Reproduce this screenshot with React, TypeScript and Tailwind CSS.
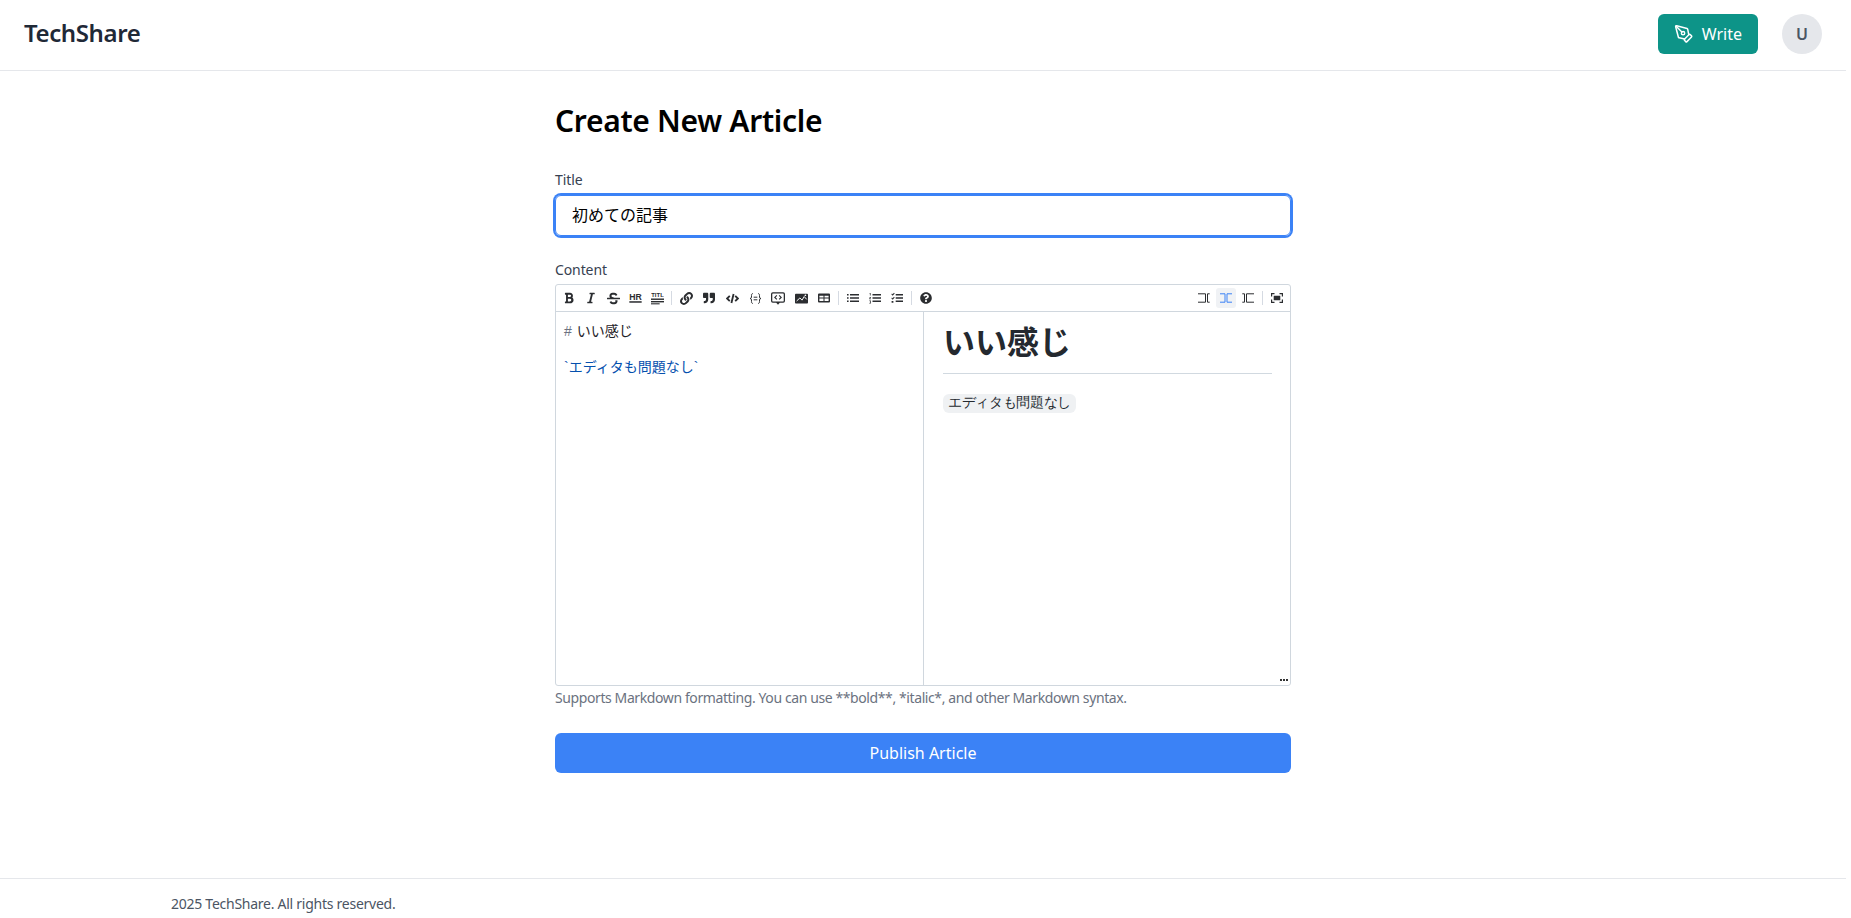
import { useState } from "react";
import { PenTool } from "lucide-react";
import { FaBold, FaItalic, FaStrikethrough, FaLink, FaQuoteRight, FaQuestionCircle } from "react-icons/fa";

const sans = "font-['Noto_Sans','Noto_Sans_CJK_JP',sans-serif]";

function Ico({ children, size = 12 }: { children: React.ReactNode; size?: number }) {
  return (
    <svg viewBox="0 0 12 12" width={size} height={size} fill="currentColor" className="block">
      {children}
    </svg>
  );
}

function ToolBtn({ children, active }: { children: React.ReactNode; active?: boolean }) {
  return (
    <button
      type="button"
      className={`flex h-5 w-5 shrink-0 items-center justify-center rounded-[3px] ${active ? "bg-[#f0f2f5] text-[#3b82f6]" : "text-[#2b2d30]"}`}
    >
      {children}
    </button>
  );
}

const Sep = () => <span className="mx-[4px] h-[14px] w-px shrink-0 bg-[#d5dae2]" />;

const groupOne = [
  <FaBold size={12} />,
  <FaItalic size={12} />,
  <FaStrikethrough size={13} />,
  <Ico size={13}>
    <text x="6" y="7" fontSize="8" fontWeight="700" textAnchor="middle" fontFamily="Liberation Sans">HR</text>
    <rect x=".3" y="8.500" width="11.400" height="1.400" />
  </Ico>,
  <Ico size={13}>
    <text x="6" y="5" fontSize="5.500" fontWeight="700" textAnchor="middle" fontFamily="Liberation Sans">TITL</text>
    <rect x="0" y="6" width="12" height="1.300" />
    <rect x="0" y="8.300" width="12" height="1.300" />
    <rect x="0" y="10.400" width="8" height="1" />
  </Ico>,
];

const groupTwo = [
  <FaLink size={13} />,
  <FaQuoteRight size={12} />,
  <Ico size={13}>
    <path d="M3.500 3.500 1 6l2.500 2.500M8.500 3.500 11 6l-2.500 2.500M7 1.800 5 10.200" fill="none" stroke="currentColor" strokeWidth="1.700" />
  </Ico>,
  <Ico size={13}>
    <path d="M3.500 1.500C2.300 1.500 2.300 2.300 2.300 3.200v1.500C2.300 5.500 1.800 6 1 6c.8 0 1.300.5 1.300 1.300v1.500c0 .9 0 1.700 1.200 1.700M8.500 1.500c1.200 0 1.200.8 1.200 1.700v1.500C9.700 5.500 10.200 6 11 6c-.8 0-1.300.5-1.300 1.300v1.500c0 .9 0 1.700-1.200 1.700M4.300 4.800h3.400M4.300 7.200h3.400" fill="none" stroke="currentColor" strokeWidth=".9" />
  </Ico>,
  <Ico size={14}>
    <path fillRule="evenodd" d="M1.500 1h9A1.500 1.500 0 0 1 12 2.500v6A1.500 1.500 0 0 1 10.500 10H7.500L6 11.800 4.500 10h-3A1.500 1.500 0 0 1 0 8.500v-6A1.500 1.500 0 0 1 1.500 1zm0 1.100a.4.4 0 0 0-.4.4v6c0 .2.200.4.400.4h9c.2 0 .4-.2.400-.4v-6a.4.4 0 0 0-.4-.4h-9z" />
    <path d="M5 3.800 3.300 5.500 5 7.200M7 3.800l1.700 1.700L7 7.200" fill="none" stroke="currentColor" strokeWidth="1" />
  </Ico>,
  <Ico size={13}>
    <rect x="0" y="1.500" width="12" height="9" rx=".8" />
    <path d="M1.500 8.300 4.500 5.500 6.500 7.500 8.500 4.200 10.800 6.800" fill="none" stroke="#fff" strokeWidth=".9" />
    <circle cx="9.600" cy="3" r=".8" fill="#fff" />
  </Ico>,
  <Ico>
    <path fillRule="evenodd" d="M1 1.500h10a1 1 0 0 1 1 1v7a1 1 0 0 1-1 1H1a1 1 0 0 1-1-1v-7a1 1 0 0 1 1-1zm.4 2.300v1.800h4.100V3.800H1.400zm5.100 0v1.800h4.100V3.800H6.500zM1.400 6.600v2.500h4.100V6.600H1.400zm5.100 0v2.500h4.100V6.600H6.500z" />
  </Ico>,
];

const groupThree = [
  <Ico>
    <path d="M0 2h1.600v1.400H0zM3 2h9v1.400H3zM0 5.300h1.600v1.400H0zM3 5.300h9v1.400H3zM0 8.600h1.600V10H0zM3 8.600h9V10H3z" />
  </Ico>,
  <Ico>
    <path d="M.6 1h1v2.500H.9V1.800H.6zM.3 5h1.600v.6l-.9 1h.9v.6H.3v-.6l.9-1H.3zM.3 8.500h1.600v3H.3v-.5h.9v-.7H.6v-.5h.6v-.8H.3zM3.500 2H12v1.400H3.500zM3.500 5.300H12v1.400H3.500zM3.500 8.600H12V10H3.500z" />
  </Ico>,
  <Ico>
    <path d="M.3 2.200l.7-.6.6.7L3 .8l.7.6-2 2.400zM.3 6.200l.7-.6.6.7L3 4.800l.7.6-2 2.400zM.6 9h1.800v1.800H.6zM4.700 2H12v1.400H4.700zM4.700 5.300H12v1.400H4.700zM4.700 8.600H12V10H4.700z" />
  </Ico>,
];

const viewBtns = [
  { d: "M0 1.800h7.500v8.400H0M11.700 1.800H9.500v8.400h2.200", active: false },
  { d: "M0 1.800h5v8.400H0M12 1.800H7v8.400h5", active: true },
  { d: "M.3 1.800h2.200v8.400H.3M12 1.800H4.500v8.400H12", active: false },
];

export default function App() {
  const [title, setTitle] = useState("初めての記事");

  return (
    <div className={`flex h-screen w-[1846px] flex-col overflow-hidden bg-white ${sans}`}>
      <header className="flex items-center justify-between border-b border-[#e5e7eb] px-6 pt-[14px] pb-4">
        <a className="pb-[2px] text-2xl font-semibold tracking-[-0.4px] text-[#1f2937]">TechShare</a>
        <div className="flex items-center gap-6">
          <button className="flex h-10 w-[100px] items-center gap-2 rounded-md bg-[#0d9488] px-4 text-base text-white">
            <PenTool size={20} strokeWidth={1.800} />
            Write
          </button>
          <div className="flex h-10 w-10 items-center justify-center rounded-full bg-[#e5e7eb] text-base font-semibold text-[#4b5563]">U</div>
        </div>
      </header>

      <main className="mx-auto w-full max-w-[768px] flex-1 px-4 pt-8">
        <h1 className="mb-[31px] text-[30px] leading-9 font-semibold tracking-[-0.3px] text-black">Create New Article</h1>
        <form className="flex flex-col">
          <label className="mb-[5px] text-sm leading-5 tracking-[-0.1px] text-[#374151]">Title</label>
          <input
            value={title}
            onChange={(e) => setTitle(e.target.value)}
            className="mb-6 h-[41px] rounded-md border border-[#3b82f6] px-4 pb-[3px] text-base text-black ring-2 ring-[#3b82f6] outline-none"
          />
          <label className="mb-1 text-sm leading-5 tracking-[-0.1px] text-[#374151]">Content</label>

          <div className="relative flex h-[402px] flex-col rounded-[3px] border border-[#d0d7de] font-['Liberation_Sans','Noto_Sans_CJK_JP',sans-serif]">
            <div className="flex h-[27px] shrink-0 items-center justify-between border-b border-[#d0d7de] px-[3px]">
              <div className="flex items-center">
                <div className="flex items-center gap-[2px]">
                  {groupOne.map((icon, i) => <ToolBtn key={i}>{icon}</ToolBtn>)}
                </div>
                <Sep />
                <div className="flex items-center gap-[3px]">
                  {groupTwo.map((icon, i) => <ToolBtn key={i}>{icon}</ToolBtn>)}
                </div>
                <Sep />
                <div className="flex items-center gap-[2px]">
                  {groupThree.map((icon, i) => <ToolBtn key={i}>{icon}</ToolBtn>)}
                </div>
                <Sep />
                <ToolBtn><FaQuestionCircle size={12} /></ToolBtn>
              </div>
              <div className="flex items-center">
                <div className="flex items-center gap-[2px]">
                  {viewBtns.map((b, i) => (
                    <ToolBtn key={i} active={b.active}>
                      <Ico><path d={b.d} fill="none" stroke="currentColor" strokeWidth="1" /></Ico>
                    </ToolBtn>
                  ))}
                </div>
                <Sep />
                <ToolBtn>
                  <Ico><path d="M0 1h3.500v1.200H1.200v2.300H0zM8.500 1H12v3.500h-1.200V2.200H8.500zM0 7.500h1.200v2.300h2.300V11H0zM10.800 7.500H12V11H8.500V9.800h2.300zM2.700 3.700h6.600v4.600H2.700z" /></Ico>
                </ToolBtn>
              </div>
            </div>
            <div className="flex min-h-0 flex-1">
              <div className="w-[368px] shrink-0 border-r border-[#d0d7de] pt-[10px] pl-2 text-sm leading-[18px]">
                <div className="text-[#1f2328]"><span className="mr-px text-[#6b7280]">#</span> いい感じ</div>
                <div className="mt-[18px] text-[#0550ae]">`エディタも問題なし`</div>
              </div>
              <div className="flex-1 pt-[11px] pr-[18px] pl-[19px] text-[#24292f]">
                <h2 className="border-b border-[#d1d9e0] pb-[10px] text-[32px] leading-10 font-bold">いい感じ</h2>
                <p className="mt-4">
                  <code className="rounded-md bg-[#eff1f3] px-[5px] py-[2px] text-[13.6px] tracking-[-0.35px]">エディタも問題なし</code>
                </p>
              </div>
            </div>
            <svg viewBox="0 0 8 2" width="8" height="2" className="absolute right-[2px] bottom-[4px] fill-[#333]">
              <rect x="0" width="2" height="2" />
              <rect x="3" width="2" height="2" />
              <rect x="6" width="2" height="2" />
            </svg>
          </div>

          <p className="mt-[2px] text-sm leading-5 tracking-[-0.4px] text-[#6b7280]">
            Supports Markdown formatting. You can use **bold**, *italic*, and other Markdown syntax.
          </p>
          <button type="button" className="mt-[25px] h-10 rounded-md bg-[#3b82f6] pb-px text-base text-white">
            Publish Article
          </button>
        </form>
      </main>

      <footer className="h-[40px] border-t border-[#e5e7eb] pt-[15px] pl-[171px] text-sm leading-5 tracking-[-0.26px] text-[#4b5563]">
        2025 TechShare. All rights reserved.
      </footer>
    </div>
  );
}
